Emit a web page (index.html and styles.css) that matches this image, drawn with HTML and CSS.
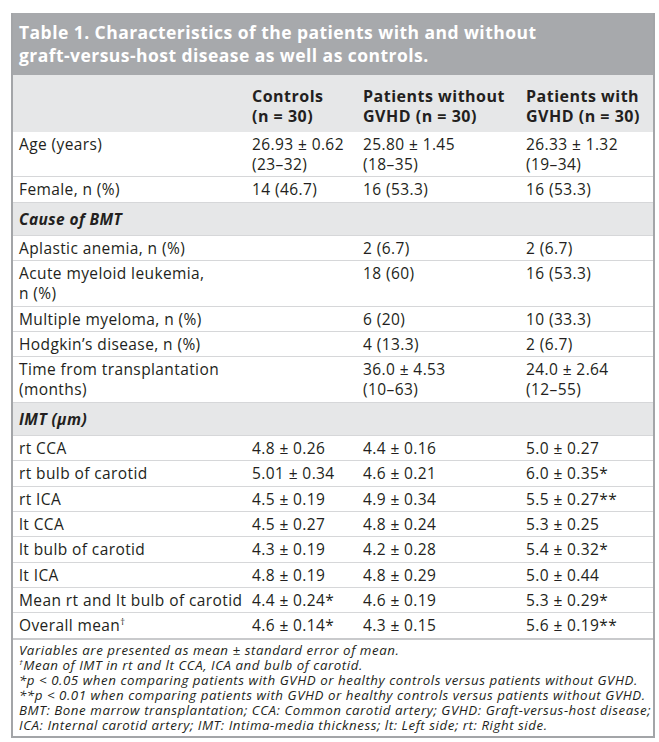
FILE: index.html
```html
<!DOCTYPE html>
<html>
<head>
<meta charset="utf-8">
<link rel="stylesheet" href="styles.css">
</head>
<body>
<div class="frame">
  <div class="title">Table 1. Characteristics of the patients with and without<br>graft-versus-host disease as well as controls.</div>
  <table class="data">
    <colgroup>
      <col class="c1"><col class="c2"><col class="c3"><col class="c4">
    </colgroup>
    <thead>
      <tr class="head">
        <th></th>
        <th>Controls<br>(n = 30)</th>
        <th>Patients without<br>GVHD (n = 30)</th>
        <th>Patients with<br>GVHD (n = 30)</th>
      </tr>
    </thead>
    <tbody>
      <tr><td>Age (years)</td><td>26.93 ± 0.62<br>(23–32)</td><td>25.80 ± 1.45<br>(18–35)</td><td>26.33 ± 1.32<br>(19–34)</td></tr>
      <tr><td>Female, n (%)</td><td>14 (46.7)</td><td>16 (53.3)</td><td>16 (53.3)</td></tr>
      <tr class="section"><td colspan="4">Cause of BMT</td></tr>
      <tr><td>Aplastic anemia, n (%)</td><td></td><td>2 (6.7)</td><td>2 (6.7)</td></tr>
      <tr><td>Acute myeloid leukemia,<br>n (%)</td><td></td><td>18 (60)</td><td>16 (53.3)</td></tr>
      <tr><td>Multiple myeloma, n (%)</td><td></td><td>6 (20)</td><td>10 (33.3)</td></tr>
      <tr><td>Hodgkin’s disease, n (%)</td><td></td><td>4 (13.3)</td><td>2 (6.7)</td></tr>
      <tr><td>Time from transplantation<br>(months)</td><td></td><td>36.0 ± 4.53<br>(10–63)</td><td>24.0 ± 2.64<br>(12–55)</td></tr>
      <tr class="section"><td colspan="4">IMT (µm)</td></tr>
      <tr><td>rt CCA</td><td>4.8 ± 0.26</td><td>4.4 ± 0.16</td><td>5.0 ± 0.27</td></tr>
      <tr><td>rt bulb of carotid</td><td>5.01 ± 0.34</td><td>4.6 ± 0.21</td><td>6.0 ± 0.35*</td></tr>
      <tr><td>rt ICA</td><td>4.5 ± 0.19</td><td>4.9 ± 0.34</td><td>5.5 ± 0.27**</td></tr>
      <tr><td>lt CCA</td><td>4.5 ± 0.27</td><td>4.8 ± 0.24</td><td>5.3 ± 0.25</td></tr>
      <tr><td>lt bulb of carotid</td><td>4.3 ± 0.19</td><td>4.2 ± 0.28</td><td>5.4 ± 0.32*</td></tr>
      <tr><td>lt ICA</td><td>4.8 ± 0.19</td><td>4.8 ± 0.29</td><td>5.0 ± 0.44</td></tr>
      <tr><td>Mean rt and lt bulb of carotid</td><td>4.4 ± 0.24*</td><td>4.6 ± 0.19</td><td>5.3 ± 0.29*</td></tr>
      <tr class="last"><td>Overall mean<sup>†</sup></td><td>4.6 ± 0.14*</td><td>4.3 ± 0.15</td><td>5.6 ± 0.19**</td></tr>
    </tbody>
  </table>
  <div class="notes">
    <p>Variables are presented as mean ± standard error of mean.</p>
    <p><sup>†</sup>Mean of IMT in rt and lt CCA, ICA and bulb of carotid.</p>
    <p>*p &lt; 0.05 when comparing patients with GVHD or healthy controls versus patients without GVHD.</p>
    <p>**p &lt; 0.01 when comparing patients with GVHD or healthy controls versus patients without GVHD.</p>
    <p>BMT: Bone marrow transplantation; CCA: Common carotid artery; GVHD: Graft-versus-host disease;</p>
    <p>ICA: Internal carotid artery; IMT: Intima-media thickness; lt: Left side; rt: Right side.</p>
  </div>
</div>
</body>
</html>
```

FILE: styles.css
```css
html, body {
  margin: 0;
  padding: 0;
  background: #ffffff;
}
body {
  padding: 13px 0 0 11px;
  font-family: "Open Sans", "Noto Sans", sans-serif;
  color: #231f20;
}
.frame {
  width: 640px;
  border: 2px solid #a3a5a8;
  border-top: 0;
  background: #ffffff;
}
.title {
  background: #a7a9ac;
  color: #ffffff;
  font-weight: 700;
  font-size: 17.5px;
  letter-spacing: 0.45px;
  line-height: 23px;
  padding: 8px 4px 8px 6px;
  white-space: nowrap;
}
.data {
  width: 640px;
  border-collapse: collapse;
  table-layout: fixed;
  font-size: 15.5px;
  letter-spacing: 0.4px;
  line-height: 20px;
}
.c1 { width: 233px; }
.c2 { width: 111px; }
.c3 { width: 163px; }
.c4 { width: 133px; }
.data th, .data td {
  text-align: left;
  vertical-align: top;
  padding: 2px 0 2.4px 6px;
  white-space: nowrap;
}
.head th {
  background: #e6e7e8;
  font-weight: 700;
  font-size: 16px;
  letter-spacing: 0.5px;
  padding: 11px 0 6px 6px;
}
.data tbody td {
  border-top: 1px solid #d6d7d9;
}
.data tbody tr:first-child td {
  border-top: 0;
}
.section td {
  background: #e6e7e8;
  font-weight: 700;
  font-style: italic;
  padding: 6px 0 6px 6px;
}
.last td {
  border-bottom: 2px solid #c9cacc;
}
sup {
  font-size: 0.6em;
  line-height: 0;
  vertical-align: 0.6em;
}
.notes {
  padding: 3px 2px 3px 6px;
  font-style: italic;
  font-size: 13.3px;
  letter-spacing: 0.55px;
  line-height: 15px;
}
.notes p {
  margin: 0;
  white-space: nowrap;
}
```
